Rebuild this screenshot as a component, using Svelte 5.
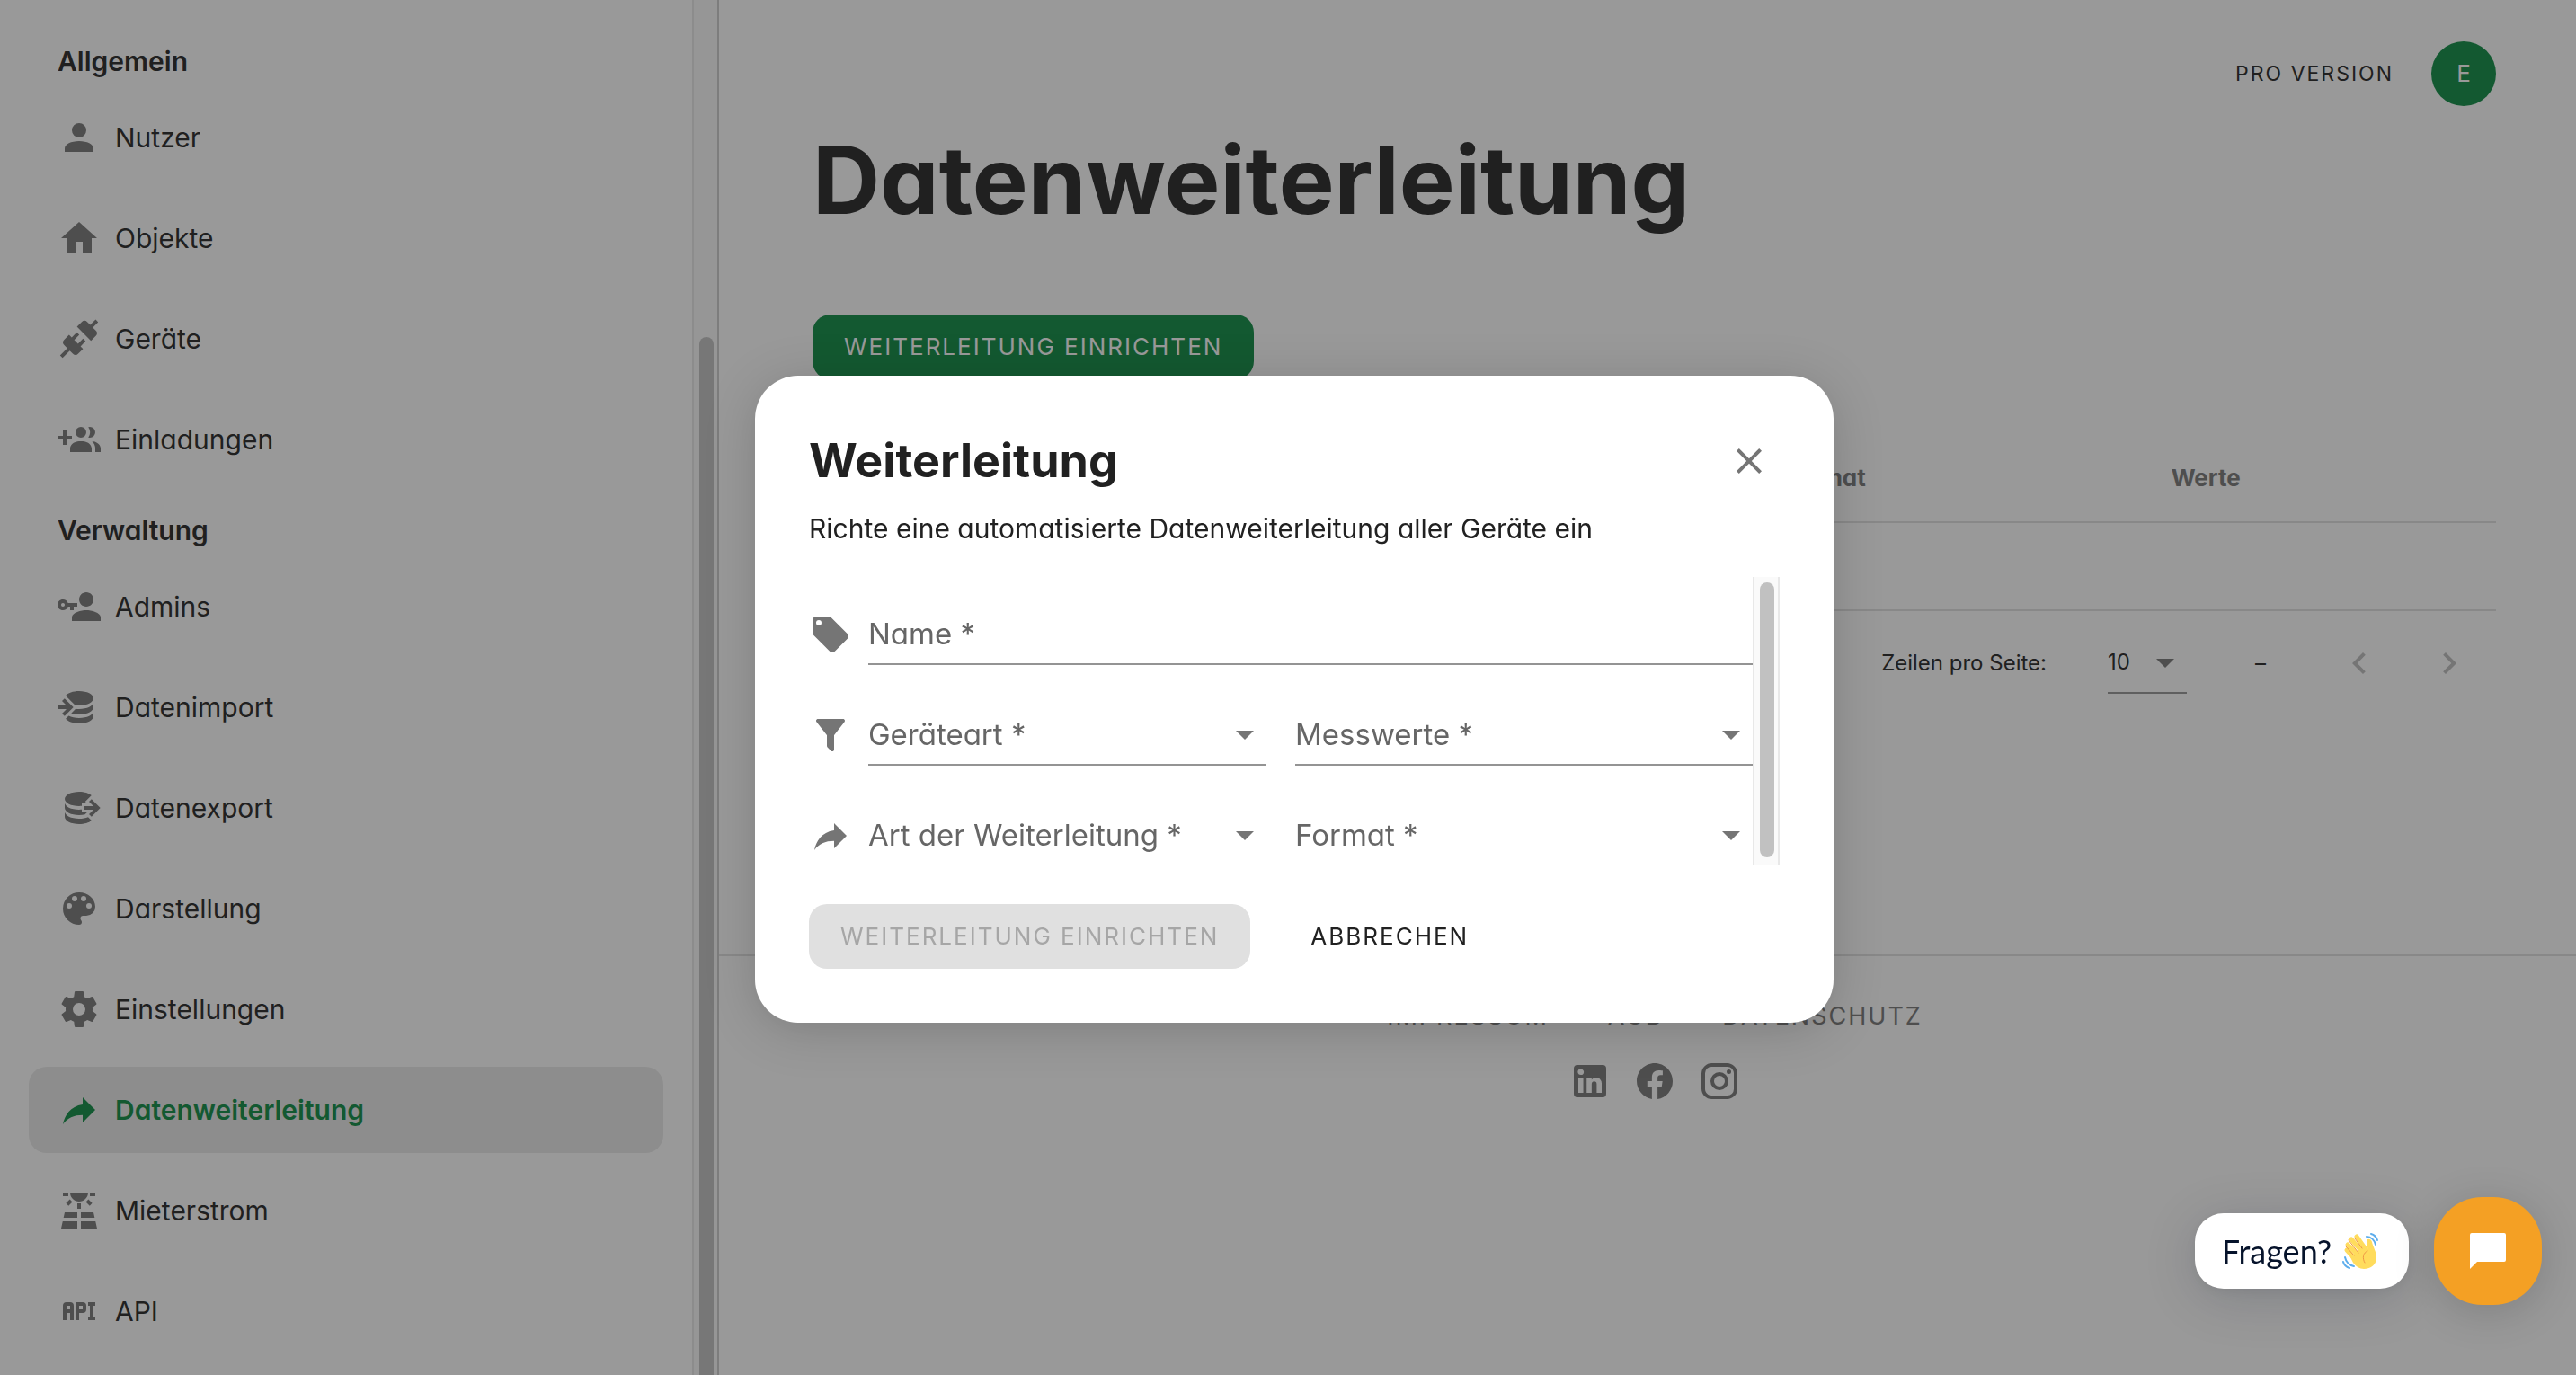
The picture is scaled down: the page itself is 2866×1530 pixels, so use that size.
<script>
  const icons = {
    account: 'M12,4A4,4 0 0,1 16,8A4,4 0 0,1 12,12A4,4 0 0,1 8,8A4,4 0 0,1 12,4M12,14C16.42,14 20,15.79 20,18V20H4V18C4,15.79 7.58,14 12,14Z',
    home: 'M10,20V14H14V20H19V12H22L12,3L2,12H5V20H10Z',
    connection: 'M21.4 7.5C22.2 8.3 22.2 9.6 21.4 10.3L18.6 13.1L10.8 5.3L13.6 2.5C14.4 1.7 15.7 1.7 16.4 2.5L18.2 4.3L21.2 1.3L22.6 2.7L19.6 5.7L21.4 7.5M15.6 13.3L14.2 11.9L11.4 14.7L9.3 12.6L12.1 9.8L10.7 8.4L7.9 11.2L6.4 9.8L3.6 12.6C2.8 13.4 2.8 14.7 3.6 15.4L5.4 17.2L1.4 21.2L2.8 22.6L6.8 18.6L8.6 20.4C9.4 21.2 10.7 21.2 11.4 20.4L14.2 17.6L12.8 16.2L15.6 13.3Z',
    invite: 'M19 17V19H7V17S7 13 13 13 19 17 19 17M16 8A3 3 0 1 0 13 11A3 3 0 0 0 16 8M19.2 13.06A5.6 5.6 0 0 1 21 17V19H24V17S24 13.55 19.2 13.06M18 5A2.91 2.91 0 0 0 17.11 5.14A5 5 0 0 1 17.11 10.86A2.91 2.91 0 0 0 18 11A3 3 0 0 0 18 5M8 10H5V7H3V10H0V12H3V15H5V12H8Z',
    accountKey: 'M11 10V12H9V14H7V12H5.8C5.4 13.2 4.3 14 3 14C1.3 14 0 12.7 0 11S1.3 8 3 8C4.3 8 5.4 8.8 5.8 10H11M3 10C2.4 10 2 10.4 2 11S2.4 12 3 12 4 11.6 4 11 3.6 10 3 10M16 14C18.7 14 24 15.3 24 18V20H8V18C8 15.3 13.3 14 16 14M16 12C13.8 12 12 10.2 12 8S13.8 4 16 4 20 5.8 20 8 18.2 12 16 12Z',
    dbImport: 'M12,3C8.59,3 5.69,4.07 4.54,5.57L9.79,10.82C10.5,10.93 11.22,11 12,11C16.42,11 20,9.21 20,7C20,4.79 16.42,3 12,3M3.92,7.08L2.5,8.5L5,11H0V13H5L2.5,15.5L3.92,16.92L8.84,12M20,9C20,11.21 16.42,13 12,13C11.34,13 10.7,12.95 10.09,12.87L7.62,15.34C8.88,15.75 10.38,16 12,16C16.42,16 20,14.21 20,12M20,14C20,16.21 16.42,18 12,18C9.72,18 7.67,17.5 6.21,16.75L4.53,18.43C5.68,19.93 8.59,21 12,21C16.42,21 20,19.21 20,17',
    dbExport: 'M12,3C7.58,3 4,4.79 4,7C4,9.21 7.58,11 12,11C12.5,11 13,10.97 13.5,10.92V9.5H16.39L15.39,8.5L18.9,5C17.5,3.8 14.94,3 12,3M18.92,7.08L17.5,8.5L20,11H15V13H20L17.5,15.5L18.92,16.92L23.84,12M4,9V12C4,14.21 7.58,16 12,16C13.17,16 14.26,15.85 15.25,15.63L16.38,14.5H13.5V12.92C13,12.97 12.5,13 12,13C7.58,13 4,11.21 4,9M4,14V17C4,19.21 7.58,21 12,21C14.94,21 17.5,20.2 18.9,19L17,17.1C15.61,17.66 13.9,18 12,18C7.58,18 4,16.21 4,14Z',
    palette: 'M17.5,12A1.5,1.5 0 0,1 16,10.5A1.5,1.5 0 0,1 17.5,9A1.5,1.5 0 0,1 19,10.5A1.5,1.5 0 0,1 17.5,12M14.5,8A1.5,1.5 0 0,1 13,6.5A1.5,1.5 0 0,1 14.5,5A1.5,1.5 0 0,1 16,6.5A1.5,1.5 0 0,1 14.5,8M9.5,8A1.5,1.5 0 0,1 8,6.5A1.5,1.5 0 0,1 9.5,5A1.5,1.5 0 0,1 11,6.5A1.5,1.5 0 0,1 9.5,8M6.5,12A1.5,1.5 0 0,1 5,10.5A1.5,1.5 0 0,1 6.5,9A1.5,1.5 0 0,1 8,10.5A1.5,1.5 0 0,1 6.5,12M12,3A9,9 0 0,0 3,12A9,9 0 0,0 12,21A1.5,1.5 0 0,0 13.5,19.5C13.5,19.11 13.35,18.76 13.11,18.5C12.88,18.23 12.73,17.88 12.73,17.5A1.5,1.5 0 0,1 14.23,16H16A5,5 0 0,0 21,11C21,6.58 16.97,3 12,3Z',
    cog: 'M12,15.5A3.5,3.5 0 0,1 8.5,12A3.5,3.5 0 0,1 12,8.5A3.5,3.5 0 0,1 15.5,12A3.5,3.5 0 0,1 12,15.5M19.43,12.97C19.47,12.65 19.5,12.33 19.5,12C19.5,11.67 19.47,11.34 19.43,11L21.54,9.37C21.73,9.22 21.78,8.95 21.66,8.73L19.66,5.27C19.54,5.05 19.27,4.96 19.05,5.05L16.56,6.05C16.04,5.66 15.5,5.32 14.87,5.07L14.5,2.42C14.46,2.18 14.25,2 14,2H10C9.75,2 9.54,2.18 9.5,2.42L9.13,5.07C8.5,5.32 7.96,5.66 7.44,6.05L4.95,5.05C4.73,4.96 4.46,5.05 4.34,5.27L2.34,8.73C2.21,8.95 2.27,9.22 2.46,9.37L4.57,11C4.53,11.34 4.5,11.67 4.5,12C4.5,12.33 4.53,12.65 4.57,12.97L2.46,14.63C2.27,14.78 2.21,15.05 2.34,15.27L4.34,18.73C4.46,18.95 4.73,19.03 4.95,18.95L7.44,17.94C7.96,18.34 8.5,18.68 9.13,18.93L9.5,21.58C9.54,21.82 9.75,22 10,22H14C14.25,22 14.46,21.82 14.5,21.58L14.87,18.93C15.5,18.67 16.04,18.34 16.56,17.94L19.05,18.95C19.27,19.03 19.54,18.95 19.66,18.73L21.66,15.27C21.78,15.05 21.73,14.78 21.54,14.63L19.43,12.97Z',
    share: 'M21,12L14,5V9C7,10 4,15 3,20C5.5,16.5 9,14.9 14,14.9V19L21,12Z',
    solar: 'M3.33 16H11V13H4L3.33 16M13 16H20.67L20 13H13V16M21.11 18H13V22H22L21.11 18M2 22H11V18H2.89L2 22M11 8H13V11H11V8M15.76 7.21L17.18 5.79L19.3 7.91L17.89 9.33L15.76 7.21M4.71 7.91L6.83 5.79L8.24 7.21L6.12 9.33L4.71 7.91M3 2H6V4H3V2M18 2H21V4H18V2M12 7C14.76 7 17 4.76 17 2H7C7 4.76 9.24 7 12 7Z',
    api: 'M7 7H5A2 2 0 0 0 3 9V17H5V13H7V17H9V9A2 2 0 0 0 7 7M7 11H5V9H7M14 7H10V17H12V13H14A2 2 0 0 0 16 11V9A2 2 0 0 0 14 7M14 11H12V9H14M20 9V15H21V17H17V15H18V9H17V7H21V9Z',
    tag: 'M5.5,7A1.5,1.5 0 0,1 4,5.5A1.5,1.5 0 0,1 5.5,4A1.5,1.5 0 0,1 7,5.5A1.5,1.5 0 0,1 5.5,7M21.41,11.58L12.41,2.58C12.05,2.22 11.55,2 11,2H4C2.89,2 2,2.89 2,4V11C2,11.55 2.22,12.05 2.59,12.41L11.58,21.41C11.95,21.77 12.45,22 13,22C13.55,22 14.05,21.77 14.41,21.41L21.41,14.41C21.78,14.05 22,13.55 22,13C22,12.44 21.77,11.94 21.41,11.58Z',
    filter: 'M14,12V19.88C14.04,20.18 13.94,20.5 13.71,20.71C13.32,21.1 12.69,21.1 12.3,20.71L10.29,18.7C10.06,18.47 9.96,18.16 10,17.87V12H9.97L4.21,4.62C3.87,4.19 3.95,3.56 4.38,3.22C4.57,3.08 4.78,3 5,3V3H19V3C19.22,3 19.43,3.08 19.62,3.22C20.05,3.56 20.13,4.19 19.79,4.62L14.03,12H14Z',
    menuDown: 'M7,10L12,15L17,10H7Z',
    close: 'M19,6.41L17.59,5L12,10.59L6.41,5L5,6.41L10.59,12L5,17.59L6.41,19L12,13.41L17.59,19L19,17.59L13.41,12L19,6.41Z',
    left: 'M15.41,16.58L10.83,12L15.41,7.41L14,6L8,12L14,18L15.41,16.58Z',
    right: 'M8.59,16.58L13.17,12L8.59,7.41L10,6L16,12L10,18L8.59,16.58Z',
    linkedin: 'M19 3A2 2 0 0 1 21 5V19A2 2 0 0 1 19 21H5A2 2 0 0 1 3 19V5A2 2 0 0 1 5 3H19M18.5 18.5V13.2A3.26 3.26 0 0 0 15.24 9.94C14.39 9.94 13.4 10.46 12.92 11.24V10.13H10.13V18.5H12.92V13.57C12.92 12.8 13.54 12.17 14.31 12.17A1.4 1.4 0 0 1 15.71 13.57V18.5H18.5M6.88 8.56A1.68 1.68 0 0 0 8.56 6.88C8.56 5.95 7.81 5.19 6.88 5.19A1.69 1.69 0 0 0 5.19 6.88C5.19 7.81 5.95 8.56 6.88 8.56M8.27 18.5V10.13H5.5V18.5H8.27Z',
    facebook: 'M12 2.04C6.5 2.04 2 6.53 2 12.06C2 17.06 5.66 21.21 10.44 21.96V14.96H7.9V12.06H10.44V9.85C10.44 7.34 11.93 5.96 14.22 5.96C15.31 5.96 16.45 6.15 16.45 6.15V8.62H15.19C13.95 8.62 13.56 9.39 13.56 10.18V12.06H16.34L15.89 14.96H13.56V21.96A10 10 0 0 0 22 12.06C22 6.53 17.5 2.04 12 2.04Z',
    instagram: 'M7.8,2H16.2C19.4,2 22,4.6 22,7.8V16.2A5.8,5.8 0 0,1 16.2,22H7.8C4.6,22 2,19.4 2,16.2V7.8A5.8,5.8 0 0,1 7.8,2M7.6,4A3.6,3.6 0 0,0 4,7.6V16.4C4,18.39 5.61,20 7.6,20H16.4A3.6,3.6 0 0,0 20,16.4V7.6C20,5.61 18.39,4 16.4,4H7.6M17.25,5.5A1.25,1.25 0 0,1 18.5,6.75A1.25,1.25 0 0,1 17.25,8A1.25,1.25 0 0,1 16,6.75A1.25,1.25 0 0,1 17.25,5.5M12,7A5,5 0 0,1 17,12A5,5 0 0,1 12,17A5,5 0 0,1 7,12A5,5 0 0,1 12,7M12,9A3,3 0 0,0 9,12A3,3 0 0,0 12,15A3,3 0 0,0 15,12A3,3 0 0,0 12,9Z',
    chat: 'M3,2H21A1,1 0 0,1 22,3V17A1,1 0 0,1 21,18H6L2,22V3A1,1 0 0,1 3,2Z'
  };

  const groups = [
    {
      title: 'Allgemein',
      items: [
        { label: 'Nutzer', icon: 'account' },
        { label: 'Objekte', icon: 'home' },
        { label: 'Geräte', icon: 'connection' },
        { label: 'Einladungen', icon: 'invite' }
      ]
    },
    {
      title: 'Verwaltung',
      items: [
        { label: 'Admins', icon: 'accountKey' },
        { label: 'Datenimport', icon: 'dbImport' },
        { label: 'Datenexport', icon: 'dbExport' },
        { label: 'Darstellung', icon: 'palette' },
        { label: 'Einstellungen', icon: 'cog' },
        { label: 'Datenweiterleitung', icon: 'share', active: true },
        { label: 'Mieterstrom', icon: 'solar' },
        { label: 'API', icon: 'api' }
      ]
    }
  ];

  const selectRows = [
    { icon: 'filter', fields: [{ id: 'device', label: 'Geräteart *' }, { id: 'values', label: 'Messwerte *' }] },
    { icon: 'share', fields: [{ id: 'kind', label: 'Art der Weiterleitung *' }, { id: 'format', label: 'Format *' }] }
  ];

  const social = [
    { name: 'LinkedIn', icon: 'linkedin' },
    { name: 'Facebook', icon: 'facebook' },
    { name: 'Instagram', icon: 'instagram' }
  ];
</script>

{#snippet icon(name)}
  <svg class="icon" viewBox="0 0 24 24" aria-hidden="true"><path d={icons[name]} /></svg>
{/snippet}

<div class="app">
  <aside class="sidebar">
    <nav class="nav">
      {#each groups as group}
        <section class="group">
          <h2 class="group-title">{group.title}</h2>
          {#each group.items as item}
            <a class="nav-item" class:active={item.active} href="#{item.icon}">
              {@render icon(item.icon)}
              <span>{item.label}</span>
            </a>
          {/each}
        </section>
      {/each}
    </nav>
    <div class="track nav-track"><div class="thumb"></div></div>
  </aside>

  <div class="page">
    <main class="content">
      <header class="topbar">
        <span class="plan">PRO VERSION</span>
        <button class="avatar" type="button">E</button>
      </header>
      <h1 class="title">Datenweiterleitung</h1>
      <button class="btn primary" type="button">WEITERLEITUNG EINRICHTEN</button>

      <table class="table">
        <thead>
          <tr><td></td><th class="col-format">Format</th><th class="col-values">Werte</th></tr>
        </thead>
        <tbody>
          <tr><td colspan="3"></td></tr>
        </tbody>
      </table>

      <div class="pager">
        <label for="rows">Zeilen pro Seite:</label>
        <div class="rows">
          <select id="rows"><option>10</option></select>
          {@render icon('menuDown')}
        </div>
        <span class="range">–</span>
        <div class="pages">
          <button class="icon-btn" type="button" disabled aria-label="Vorherige Seite">{@render icon('left')}</button>
          <button class="icon-btn" type="button" disabled aria-label="Nächste Seite">{@render icon('right')}</button>
        </div>
      </div>
    </main>

    <footer class="footer">
      <div class="links">
        <a href="#impressum">IMPRESSUM</a>
        <a href="#agb">AGB</a>
        <a href="#datenschutz">DATENSCHUTZ</a>
      </div>
      <div class="social">
        {#each social as s}
          <a href="#{s.icon}" aria-label={s.name}>{@render icon(s.icon)}</a>
        {/each}
      </div>
    </footer>
  </div>
</div>

<div class="overlay">
  <div class="dialog" role="dialog" aria-modal="true" aria-labelledby="dialog-title">
    <div class="dialog-head">
      <h2 id="dialog-title">Weiterleitung</h2>
      <button class="icon-btn close" type="button" aria-label="Schließen">{@render icon('close')}</button>
    </div>
    <p class="lead">Richte eine automatisierte Datenweiterleitung aller Geräte ein</p>

    <div class="scroll">
      <form class="fields">
        <div class="row">
          {@render icon('tag')}
          <div class="field">
            <label for="name">Name *</label>
            <input id="name" type="text" />
          </div>
        </div>
        {#each selectRows as row}
          <div class="pair">
            <div class="row">
              {@render icon(row.icon)}
              <div class="field">
                <label for={row.fields[0].id}>{row.fields[0].label}</label>
                <select id={row.fields[0].id}><option></option></select>
                {@render icon('menuDown')}
              </div>
            </div>
            <div class="row">
              <div class="field">
                <label for={row.fields[1].id}>{row.fields[1].label}</label>
                <select id={row.fields[1].id}><option></option></select>
                {@render icon('menuDown')}
              </div>
            </div>
          </div>
        {/each}
      </form>
      <div class="track form-track"><div class="thumb"></div></div>
    </div>

    <div class="actions">
      <button class="btn" type="button" disabled>WEITERLEITUNG EINRICHTEN</button>
      <button class="btn text" type="button">ABBRECHEN</button>
    </div>
  </div>
</div>

<div class="chat">
  <button class="bubble" type="button">
    <span>Fragen?</span>
    <svg class="wave" viewBox="0 0 40 40" aria-hidden="true">
      <g fill="none" stroke="#5dadec" stroke-width="2" stroke-linecap="round">
        <path d="M27 4c5 0 9 4 10 9" />
        <path d="M32 1c4 1 6 4 7 7" />
        <path d="M3 27c1 5 5 9 10 10" />
        <path d="M1 32c1 4 4 6 7 7" />
      </g>
      <g fill="none" stroke="#ffdc5d" stroke-width="5" stroke-linecap="round">
        <path d="M5 19l12 13M6 13l14 14M10 7l14 16M16 4l12 17" />
      </g>
      <path fill="#ffdc5d" d="M28 21c1-4-1-9-1-12 0-3 5-3 6 1 1 5 5 11 5 17 0 8-6 13-14 13-5 0-9-3-12-7l-3-6 12-11z" />
      <g fill="none" stroke="#ef9645" stroke-width="1" stroke-linecap="round">
        <path d="M4 15l9 10M7 8l11 14M14 6l8 11M28 20c-5 2-6 8-3 13" />
      </g>
    </svg>
  </button>
  <button class="launcher" type="button" aria-label="Chat öffnen">{@render icon('chat')}</button>
</div>

<style>
  :global(body) {
    margin: 0;
    background: #fff;
    color: #212121;
    font-family: Inter, 'Open Sans', sans-serif;
    font-feature-settings: 'cv11';
    font-size: 30px;
    line-height: 40px;
    overflow: hidden;
  }
  :global(*) { box-sizing: border-box; }
  button, input, select {
    font: inherit;
    font-feature-settings: inherit;
    color: inherit;
    background: none;
    border: 0;
    border-radius: 0;
    margin: 0;
    padding: 0;
    appearance: none;
    outline: none;
  }
  a { color: inherit; text-decoration: none; }
  h1, h2, p { margin: 0; }
  .icon { display: block; flex: none; width: 48px; height: 48px; fill: #757575; }

  .app { display: flex; height: 100vh; }

  .sidebar {
    flex: none;
    display: flex;
    width: 800px;
    border-right: 2px solid #ccc;
    overflow: hidden;
  }
  .nav { flex: 1; padding: 31px 32px; }
  .group-title {
    height: 74px;
    padding-left: 32px;
    font-size: 30px;
    font-weight: 600;
    line-height: 74px;
  }
  .nav-item {
    display: flex;
    align-items: center;
    gap: 16px;
    height: 96px;
    margin-bottom: 16px;
    padding: 0 32px;
    border-radius: 20px;
  }
  .nav-item.active { background: #e9e9e9; color: #09893f; font-weight: 600; }
  .active .icon { fill: #09893f; }

  .track { flex: none; background: #fafafa; border: solid #e8e8e8; border-width: 0 2px; }
  .thumb { height: 100%; border-radius: 8px; background: #c1c1c1; }
  .nav-track { width: 28px; padding: 375px 4px 0 6px; border-right-width: 0; }
  .nav-track .thumb { border-radius: 8px 8px 0 0; }

  .page { flex: 1; min-width: 0; }
  .content { padding: 46px 89px 0 104px; }
  .topbar { display: flex; justify-content: flex-end; align-items: center; gap: 42px; }
  .plan { font-size: 23px; letter-spacing: 2px; }
  .avatar {
    width: 72px;
    height: 72px;
    border-radius: 50%;
    background: #09893f;
    color: #fff;
    font-size: 26px;
  }
  .title { margin: 22px 0 90px; font-size: 104px; font-weight: 700; line-height: 120px; }

  .btn {
    height: 72px;
    padding: 0 35px;
    border-radius: 20px;
    font-size: 26px;
    letter-spacing: 2px;
    white-space: nowrap;
  }
  .primary { display: block; background: #09893f; color: #fff; }
  .btn:disabled { background: #e0e0e0; color: #a6a6a6; }

  .table { width: 100%; margin-top: 61px; border-collapse: collapse; table-layout: fixed; }
  .table th, .table td { height: 98px; padding: 0 32px; border-bottom: 2px solid #e0e0e0; text-align: left; }
  .table th { font-size: 26px; font-weight: 700; color: #757575; }
  .col-format { width: 23%; }
  .col-values { width: 21%; }

  .pager {
    display: flex;
    justify-content: flex-end;
    align-items: center;
    height: 116px;
    padding-right: 28px;
    font-size: 24px;
  }
  .rows {
    display: flex;
    align-items: center;
    width: 88px;
    height: 68px;
    margin: 0 76px 0 68px;
    border-bottom: 2px solid #949494;
  }
  .rows select { width: 40px; flex: none; }
  .range { width: 92px; }
  .pages { display: flex; gap: 52px; }
  .icon-btn { display: block; width: 48px; height: 48px; }
  .icon-btn:disabled .icon { fill: #bdbdbd; }

  .footer {
    margin-top: 266px;
    padding: 47px 0 0 16px;
    border-top: 2px solid #e0e0e0;
    color: #757575;
  }
  .links { display: flex; justify-content: center; gap: 66px; font-size: 27px; letter-spacing: 2px; }
  .social { display: flex; justify-content: center; gap: 24px; margin-top: 28px; }

  .overlay {
    position: fixed;
    inset: 0;
    display: flex;
    align-items: center;
    justify-content: center;
    padding: 25px 0 0 14px;
    background: rgba(33, 33, 33, 0.46);
  }
  .dialog {
    width: 1200px;
    padding: 60px;
    border-radius: 48px;
    background: #fff;
    box-shadow: 0 8px 56px rgba(0, 0, 0, 0.18);
  }
  .dialog-head { display: flex; justify-content: space-between; align-items: center; height: 70px; padding-right: 10px; }
  .dialog-head h2 { font-size: 52px; font-weight: 700; line-height: 70px; }
  .lead { margin: 20px 0 34px; }
  .scroll { display: flex; max-height: 320px; overflow: hidden; }
  .fields { flex: 1; display: flex; flex-direction: column; gap: 44px; padding-top: 30px; }
  .form-track { width: 30px; height: 320px; padding: 6px 4px 8px 6px; }
  .pair { display: grid; grid-template-columns: 1fr 1fr; gap: 32px; }
  .row { display: flex; align-items: center; gap: 18px; }
  .field {
    flex: 1;
    display: grid;
    grid-template-columns: 1fr 48px;
    align-items: center;
    height: 68px;
    border-bottom: 2px solid #949494;
    font-size: 33px;
  }
  .field label { grid-area: 1 / 1; color: #666; white-space: nowrap; pointer-events: none; }
  .field input, .field select { grid-area: 1 / 1 / 2 / 3; width: 100%; height: 66px; }
  .field .icon { grid-area: 1 / 2; pointer-events: none; }
  .actions { display: flex; gap: 32px; margin-top: 44px; }

  .chat {
    position: fixed;
    right: 38px;
    bottom: 78px;
    display: flex;
    align-items: center;
    gap: 28px;
  }
  .bubble {
    display: flex;
    align-items: center;
    gap: 12px;
    height: 84px;
    padding: 0 34px 0 30px;
    border-radius: 32px;
    background: #fff;
    color: #06132b;
    font-family: Lato, sans-serif;
    font-size: 36px;
    box-shadow: 0 10px 60px rgba(0, 18, 46, 0.16), 0 4px 16px rgba(0, 18, 46, 0.06);
  }
  .wave { width: 40px; height: 40px; }
  .launcher {
    display: flex;
    align-items: center;
    justify-content: center;
    width: 120px;
    height: 120px;
    border-radius: 54px;
    background: #f4a024;
    box-shadow: 0 8px 48px rgba(0, 0, 0, 0.16);
  }
  .launcher .icon { fill: #fff; }
</style>
